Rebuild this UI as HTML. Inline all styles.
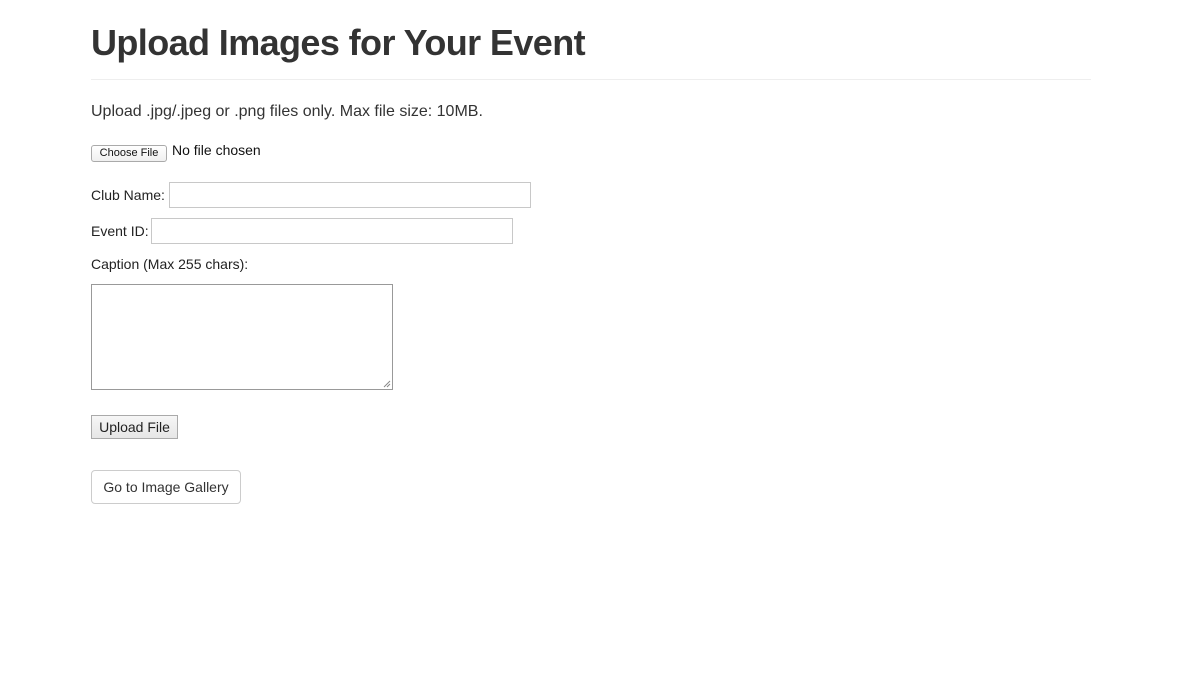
<!DOCTYPE html>
<html><head><meta charset="utf-8"><style>
body{margin:0;background:#fff;font-family:"Liberation Sans",sans-serif;color:#333;width:1179px;height:684px;position:relative;overflow:hidden}
.a{position:absolute;white-space:nowrap}
h1{position:absolute;left:91px;top:21px;margin:0;font-size:36px;font-weight:bold;color:#333;line-height:44px;letter-spacing:-0.6px}
.hr{position:absolute;left:91px;top:79px;width:1000px;height:1px;background:#eee}
.box{position:absolute;border:1px solid #c8c8c8;background:#fff;box-sizing:border-box}
</style></head><body>
<h1>Upload Images for Your Event</h1>
<div class="hr"></div>
<div class="a" style="left:91px;top:103px;font-size:16px">Upload .jpg/.jpeg or .png files only. Max file size: 10MB.</div>
<div class="a" style="left:91px;top:145px;width:76px;height:17px;border:1px solid #aaa;border-radius:3px;box-sizing:border-box;background:linear-gradient(#fff,#f0f0f0);font-size:11px;text-align:center;line-height:15px;color:#111">Choose File</div>
<div class="a" style="left:172px;top:142px;font-size:14px;color:#111">No file chosen</div>
<div class="a" style="left:91px;top:187px;font-size:14px;color:#222">Club Name:</div>
<div class="box" style="left:169px;top:182px;width:362px;height:26px"></div>
<div class="a" style="left:91px;top:223px;font-size:14px;color:#222">Event ID:</div>
<div class="box" style="left:151px;top:218px;width:362px;height:26px"></div>
<div class="a" style="left:91px;top:256px;font-size:14px;color:#222">Caption (Max 255 chars):</div>
<div class="box" style="left:91px;top:284px;width:302px;height:106px;border-color:#999"></div>
<svg class="a" style="left:383px;top:380px" width="8" height="8"><path d="M1 7L7 1M4 7L7 4" stroke="#888" stroke-width="1"/></svg>
<div class="a" style="left:91px;top:415px;width:87px;height:24px;border:1px solid #aaa;box-sizing:border-box;background:linear-gradient(#f6f6f6,#e6e6e6);font-size:14px;text-align:center;line-height:22px;color:#222">Upload File</div>
<div class="a" style="left:91px;top:470px;width:150px;height:34px;border:1px solid #ccc;border-radius:4px;box-sizing:border-box;font-size:14px;text-align:center;line-height:32px;color:#333">Go to Image Gallery</div>
</body></html>
